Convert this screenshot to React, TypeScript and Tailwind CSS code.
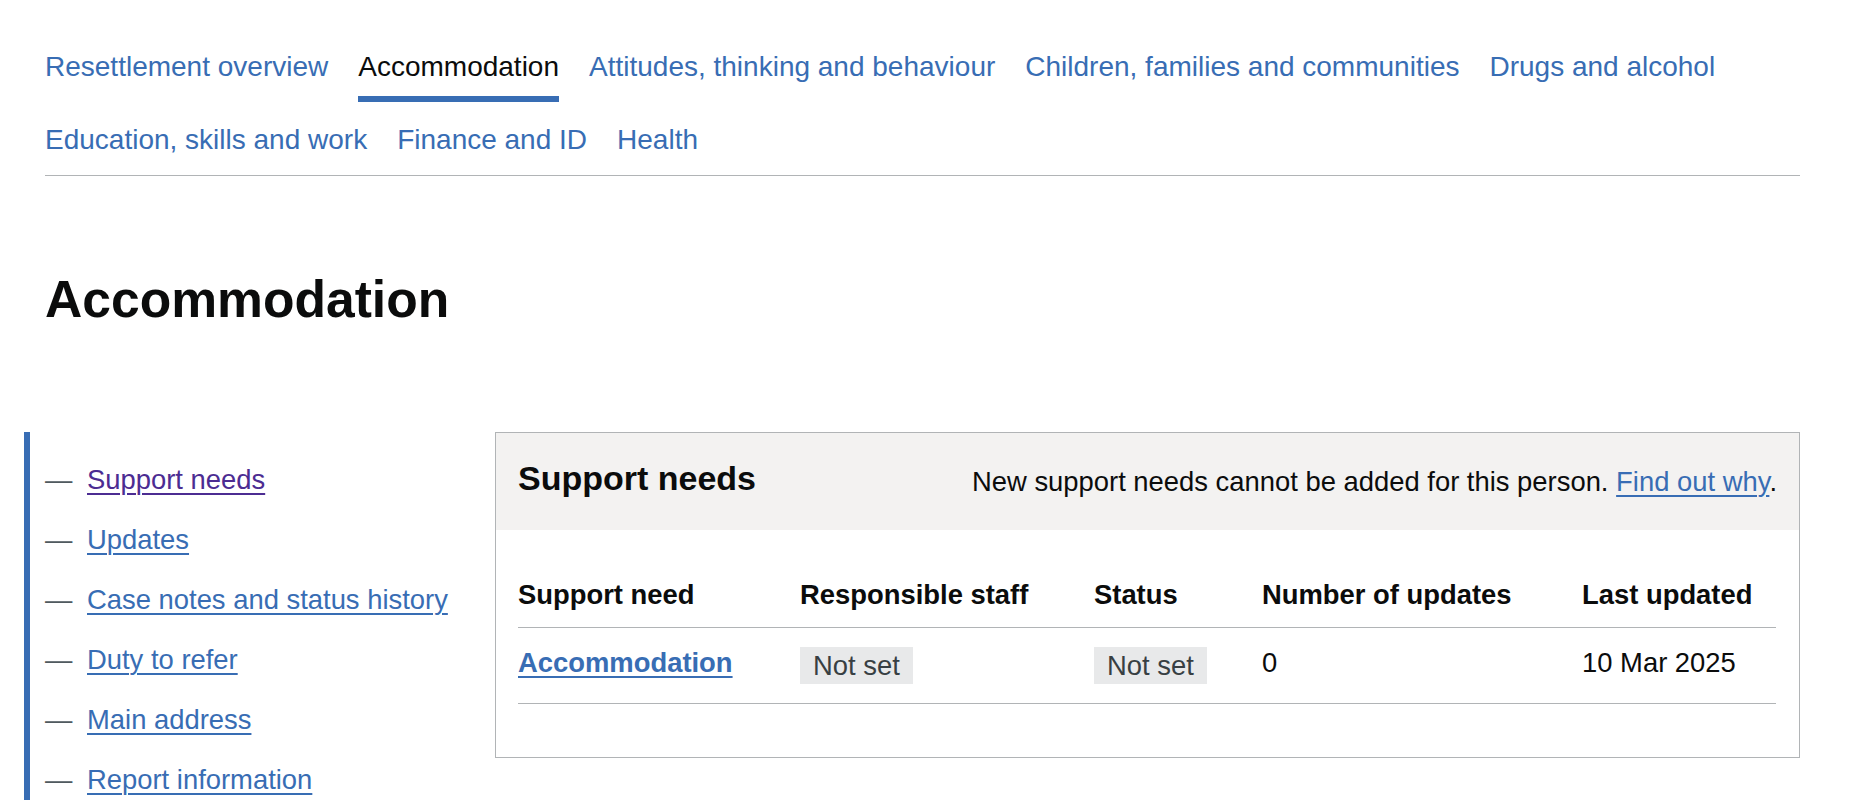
import React from "react";

const navRow = [
  { label: "Resettlement overview" },
  { label: "Accommodation", active: true },
  { label: "Attitudes, thinking and behaviour" },
  { label: "Children, families and communities" },
  { label: "Drugs and alcohol" },
  { label: "Education, skills and work" },
  { label: "Finance and ID" },
  { label: "Health" },
];

const sideItems = [
  { label: "Support needs", visited: true },
  { label: "Updates" },
  { label: "Case notes and status history" },
  { label: "Duty to refer" },
  { label: "Main address" },
  { label: "Report information" },
];

function Tag({ children }: { children: React.ReactNode }) {
  return (
    <span className="inline-block bg-[#e8e9ea] px-[13px] pt-[4px] pb-[4px] text-[27.4px] leading-[29px] text-[#383f43]">
      {children}
    </span>
  );
}

export default function App() {
  return (
    <div className="min-h-screen bg-white font-['Liberation_Sans',Arial,sans-serif] text-[#0b0c0c]">
      <div className="pl-[45px] pr-[50px] pt-[34px]">
        <nav>
          <ul className="flex flex-wrap gap-x-[30px] gap-y-[5px] border-b border-[#b1b4b6]">
            {navRow.map((item) => (
              <li key={item.label}>
                <a
                  href="#"
                  className={
                    item.active
                      ? "block pt-[15px] pb-[17px] text-[28px] leading-[36px] text-[#0b0c0c] no-underline shadow-[inset_0_-6px_0_#386db4]"
                      : "block pt-[15px] pb-[17px] text-[28px] leading-[36px] text-[#386db4] no-underline"
                  }
                >
                  {item.label}
                </a>
              </li>
            ))}
          </ul>
        </nav>

        <h1 className="mt-[95px] text-[51.6px] leading-[56px] font-bold">Accommodation</h1>

        <div className="mt-[105px] ml-[-21px] flex items-start">
          <aside className="w-[471px] shrink-0 border-l-[6px] border-[#386db4] pt-[30px] pl-[15px] pb-[60px]">
            <ul className="flex flex-col gap-[24px]">
              {sideItems.map((item) => (
                <li key={item.label} className="flex items-baseline text-[27.4px] leading-[36px]">
                  <span className="inline-block w-[42px] shrink-0 text-[#505a5f]">—</span>
                  <a
                    href="#"
                    className={
                      item.visited
                        ? "text-[#4c2c92] underline decoration-2 underline-offset-[4px]"
                        : "text-[#386db4] underline decoration-2 underline-offset-[4px]"
                    }
                  >
                    {item.label}
                  </a>
                </li>
              ))}
            </ul>
          </aside>

          <section className="flex-1 border border-[#b1b4b6]">
            <div className="flex h-[97px] items-center justify-between bg-[#f3f2f1] px-[22px]">
              <h2 className="mb-[7px] text-[34px] leading-[40px] font-bold">Support needs</h2>
              <p className="text-[27.4px] leading-[36px]">
                New support needs cannot be added for this person.{" "}
                <a href="#" className="text-[#386db4] underline decoration-2 underline-offset-[4px]">
                  Find out why
                </a>
                .
              </p>
            </div>
            <div className="px-[22px] pt-[33px] pb-[53px]">
              <table className="w-[1258px] table-fixed border-collapse text-[27.4px] leading-[36px]">
                <colgroup>
                  <col className="w-[282px]" />
                  <col className="w-[294px]" />
                  <col className="w-[168px]" />
                  <col className="w-[320px]" />
                  <col className="w-[194px]" />
                </colgroup>
                <thead>
                  <tr>
                    {["Support need", "Responsible staff", "Status", "Number of updates", "Last updated"].map((h) => (
                      <th
                        key={h}
                        className="border-b border-[#b1b4b6] py-[14px] pr-[20px] text-left align-top font-bold whitespace-nowrap"
                      >
                        {h}
                      </th>
                    ))}
                  </tr>
                </thead>
                <tbody>
                  <tr>
                    <td className="border-b border-[#b1b4b6] pt-[17px] pb-[22px] align-top">
                      <a href="#" className="font-bold text-[#386db4] underline decoration-2 underline-offset-[4px]">
                        Accommodation
                      </a>
                    </td>
                    <td className="border-b border-[#b1b4b6] pt-[19px] pb-[19px] align-top">
                      <Tag>Not set</Tag>
                    </td>
                    <td className="border-b border-[#b1b4b6] pt-[19px] pb-[19px] align-top">
                      <Tag>Not set</Tag>
                    </td>
                    <td className="border-b border-[#b1b4b6] pt-[17px] pb-[22px] align-top">0</td>
                    <td className="border-b border-[#b1b4b6] pt-[17px] pb-[22px] align-top whitespace-nowrap">10 Mar 2025</td>
                  </tr>
                </tbody>
              </table>
            </div>
          </section>
        </div>
      </div>
    </div>
  );
}
